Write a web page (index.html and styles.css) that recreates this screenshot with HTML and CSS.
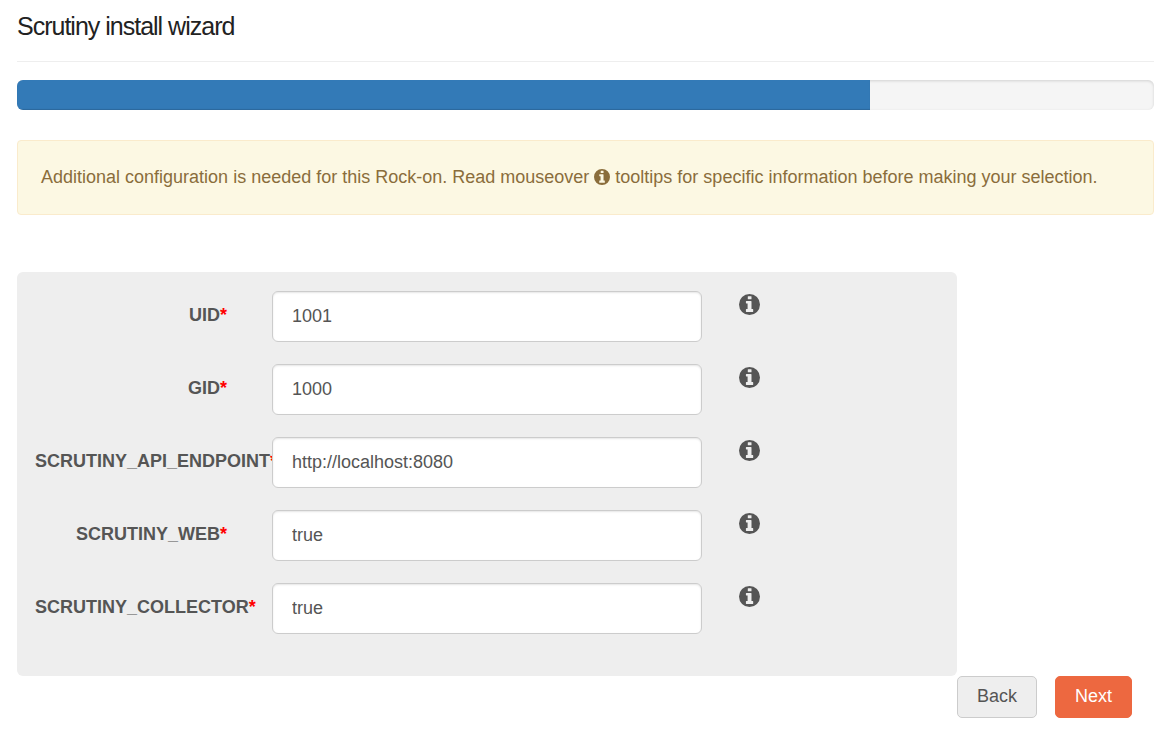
FILE: index.html
```html
<!DOCTYPE html>
<html lang="en">
<head>
<meta charset="utf-8">
<title>Scrutiny install wizard</title>
<link rel="stylesheet" href="styles.css">
</head>
<body>
<svg class="sprite" aria-hidden="true">
  <symbol id="info" viewBox="0 0 21 21">
    <path fill-rule="evenodd" d="M10.5 0a10.5 10.5 0 1 1 0 21a10.5 10.5 0 0 1 0-21zM9.200 2.200a.4.4 0 0 0-.4.4v2.300c0 .2.2.4.4.4h2.900c.2 0 .4-.2.4-.4V2.600a.4.4 0 0 0-.4-.4zM7.300 7a.4.4 0 0 0-.4.4v1.600c0 .2.2.4.4.4H8.600v5.600H7.300a.4.4 0 0 0-.4.4v2.200c0 .2.2.4.4.4h6.500c.2 0 .4-.2.4-.4v-2.200a.4.4 0 0 0-.4-.4h-1.300V7.400a.4.4 0 0 0-.4-.4z"/>
  </symbol>
</svg>
<main class="wizard">
  <h1 class="title">Scrutiny install wizard</h1>
  <div class="progress" role="progressbar" aria-label="Install progress" aria-valuemin="0" aria-valuemax="100" aria-valuenow="75"><div class="progress-bar" style="width: 75%"></div></div>
  <p class="notice">Additional configuration is needed for this Rock-on. Read mouseover <svg class="icon-small" aria-hidden="true"><use href="#info"/></svg> tooltips for specific information before making your selection.</p>
  <form class="config">
    <div class="fields">
      <div class="row"><label class="label" for="uid">UID<span class="required">*</span></label><input class="input" id="uid" type="text" value="1001"><svg class="icon" aria-hidden="true"><use href="#info"/></svg></div>
      <div class="row"><label class="label" for="gid">GID<span class="required">*</span></label><input class="input" id="gid" type="text" value="1000"><svg class="icon" aria-hidden="true"><use href="#info"/></svg></div>
      <div class="row"><label class="label" for="endpoint">SCRUTINY_API_ENDPOINT<span class="required">*</span></label><input class="input" id="endpoint" type="text" value="http://localhost:8080"><svg class="icon" aria-hidden="true"><use href="#info"/></svg></div>
      <div class="row"><label class="label" for="web">SCRUTINY_WEB<span class="required">*</span></label><input class="input" id="web" type="text" value="true"><svg class="icon" aria-hidden="true"><use href="#info"/></svg></div>
      <div class="row"><label class="label" for="collector">SCRUTINY_COLLECTOR<span class="required">*</span></label><input class="input" id="collector" type="text" value="true"><svg class="icon" aria-hidden="true"><use href="#info"/></svg></div>
    </div>
    <div class="actions">
      <button class="button" type="button">Back</button>
      <button class="button button-primary" type="submit">Next</button>
    </div>
  </form>
</main>
</body>
</html>
```

FILE: styles.css
```css
* { box-sizing: border-box; }

body {
  margin: 0;
  background: #fff;
  color: #555;
  font: 18px/26px "Liberation Sans", Arial, sans-serif;
}

.sprite { position: absolute; width: 0; height: 0; }

.wizard { padding: 8px 14px 16px 17px; }

.title {
  margin: 0 0 18px;
  padding-bottom: 17px;
  border-bottom: 1px solid #eee;
  color: #222;
  font-size: 25px;
  font-weight: 400;
  line-height: 36px;
  letter-spacing: -1px;
}

.progress {
  height: 30px;
  margin-bottom: 30px;
  overflow: hidden;
  border-radius: 6px;
  background: #f5f5f5;
  box-shadow: inset 0 1px 3px rgba(0, 0, 0, 0.15);
}

.progress-bar {
  height: 100%;
  background: #337ab7;
  box-shadow: inset 0 -1px 1px rgba(0, 0, 0, 0.15);
}

.notice {
  margin: 0 0 57px;
  padding: 23px;
  border: 1px solid #faebcc;
  border-radius: 4px;
  background: #fcf8e3;
  color: #8a6d3b;
  line-height: 27px;
}

.icon-small {
  width: 16px;
  height: 16px;
  fill: currentColor;
  vertical-align: -2px;
}

.fields {
  display: grid;
  gap: 22px;
  max-width: 940px;
  padding: 19px 18px 42px;
  border-radius: 6px;
  background: #eee;
}

.row {
  display: grid;
  grid-template-columns: 200px minmax(0, 430px) 21px;
  column-gap: 37px;
  align-items: start;
}

.label {
  margin-top: 11px;
  padding-right: 8px;
  font-weight: 700;
  text-align: right;
  white-space: nowrap;
}

.required { color: #f00; }

.input {
  width: 100%;
  height: 51px;
  padding: 8px 19px;
  border: 1px solid #ccc;
  border-radius: 6px;
  background: #fff;
  box-shadow: inset 0 1px 2px rgba(0, 0, 0, 0.1);
  color: #555;
  font: inherit;
}

.icon {
  width: 21px;
  height: 21px;
  margin-top: 3px;
  fill: currentColor;
}

.actions {
  display: flex;
  justify-content: flex-end;
  gap: 18px;
  padding-right: 22px;
}

.button {
  padding: 6px 19px 8px;
  border: 1px solid #ccc;
  border-radius: 5px;
  background: #eee;
  color: #555;
  font: inherit;
}

.button-primary {
  border-color: #ed6840;
  background: #ed6840;
  color: #fff;
}
```
